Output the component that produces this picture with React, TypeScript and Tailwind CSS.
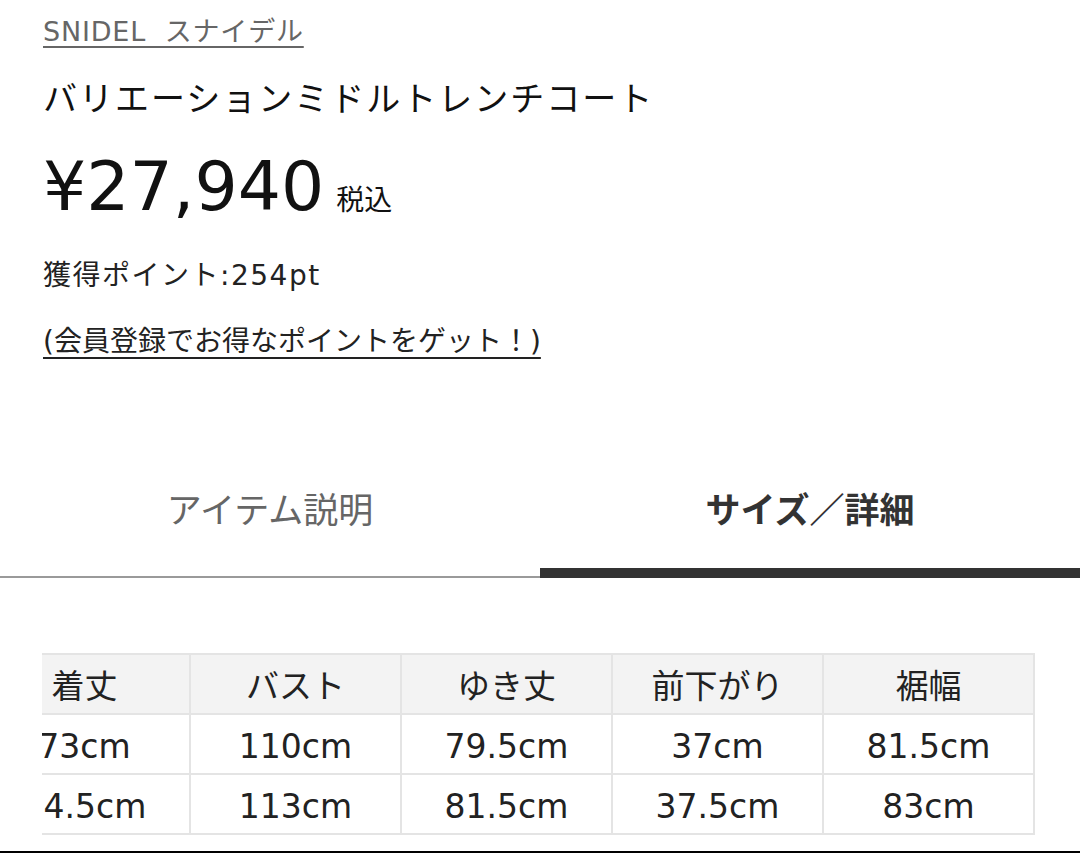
const sizes = [
  { label: "着丈", a: "73cm", b: "74.5cm" },
  { label: "バスト", a: "110cm", b: "113cm" },
  { label: "ゆき丈", a: "79.5cm", b: "81.5cm" },
  { label: "前下がり", a: "37cm", b: "37.5cm" },
  { label: "裾幅", a: "81.5cm", b: "83cm" },
]

const font = { fontFamily: '"DejaVu Sans", "Noto Sans CJK JP", sans-serif' }

export default function App() {
  return (
    <div className="w-[1080px] bg-white text-[#111]" style={font}>
      <div className="px-[43px]">
        <div className="pt-[14px] leading-[36px]">
          <a className="text-[27px] tracking-[0.8px] text-[#666] underline decoration-2 underline-offset-[5px]">
            SNIDEL&nbsp;&nbsp;スナイデル
          </a>
        </div>
        <h1 className="mt-[23px] text-[34px] tracking-[2px] leading-[44px] font-normal">
          バリエーションミドルトレンチコート
        </h1>
        <div className="mt-[28px] flex items-baseline gap-[12px]">
          <span className="text-[68px] leading-[76px]">¥27,940</span>
          <span className="text-[28px]">税込</span>
        </div>
        <p className="mt-[33px] text-[28px] leading-[36px] text-[#222] tracking-[1.5px]">
          獲得ポイント:254pt
        </p>
        <p className="mt-[30px] text-[28px] leading-[36px] text-[#222]">
          <a className="underline decoration-2 underline-offset-[6px]">(会員登録でお得なポイントをゲット！)</a>
        </p>
      </div>

      <div className="mt-[129px] grid grid-cols-2 text-[35px] leading-[44px] text-center">
        <div className="pb-[43px] border-b-2 border-[#9a9a9a] text-[#666]">アイテム説明</div>
        <div className="pb-[35px] border-b-[10px] border-[#333] text-[#333] font-bold">サイズ／詳細</div>
      </div>

      <div className="mt-[75px] mx-[42px] overflow-hidden">
        <table className="ml-[-64px] border-collapse text-[33px] text-[#222] text-center">
          <tbody>
            <tr className="h-[60px] bg-[#f3f3f3]">
              {sizes.map((s) => (
                <th key={s.label} className="w-[211px] pt-[6px] font-normal border-2 border-[#e4e4e4]">
                  {s.label}
                </th>
              ))}
            </tr>
            <tr className="h-[60px]">
              {sizes.map((s) => (
                <td key={s.label} className="pt-[6px] border-2 border-[#e4e4e4]">{s.a}</td>
              ))}
            </tr>
            <tr className="h-[60px]">
              {sizes.map((s) => (
                <td key={s.label} className="pt-[6px] border-2 border-[#e4e4e4]">{s.b}</td>
              ))}
            </tr>
          </tbody>
        </table>
      </div>

      <div className="mt-[16px] h-[2px] bg-black" />
    </div>
  )
}
